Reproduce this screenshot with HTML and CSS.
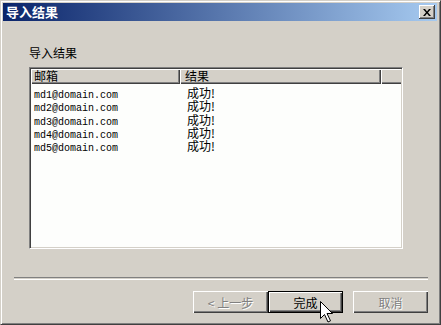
FILE: index.html
```html
<!DOCTYPE html>
<html lang="zh-CN">

<head>
    <meta charset="UTF-8">
    <meta name="viewport" content="width=device-width, initial-scale=1.0">
    <link rel="stylesheet" href="styles.css">
    <title>导入结果</title>
</head>

<body>
    <div class="window">
        <!-- Title bar -->
        <div class="titlebar">
            <span class="title">导入结果</span>
            <button class="close-btn" aria-label="关闭">
                <svg width="8" height="7" viewBox="0 0 8 7">
                    <path d="M0 0h2l2 2.5L6 0h2L5 3.5 8 7H6L4 4.5 2 7H0l3-3.5z" fill="#000"/>
                </svg>
            </button>
        </div>

        <div class="content">
            <div class="group-label">导入结果</div>

            <!-- Result list -->
            <div class="listview">
                <div class="lv-header">
                    <div class="lv-col col-mail">邮箱</div>
                    <div class="lv-col col-result">结果</div>
                    <div class="lv-col col-rest"></div>
                </div>
                <div class="lv-body">
                    <div class="lv-row"><span class="cell-mail">md1@domain.com</span><span class="cell-result">成功!</span></div>
                    <div class="lv-row"><span class="cell-mail">md2@domain.com</span><span class="cell-result">成功!</span></div>
                    <div class="lv-row"><span class="cell-mail">md3@domain.com</span><span class="cell-result">成功!</span></div>
                    <div class="lv-row"><span class="cell-mail">md4@domain.com</span><span class="cell-result">成功!</span></div>
                    <div class="lv-row"><span class="cell-mail">md5@domain.com</span><span class="cell-result">成功!</span></div>
                </div>
            </div>
        </div>

        <div class="separator"></div>

        <div class="buttons">
            <button class="btn disabled">&lt; 上一步</button>
            <button class="btn default">完成</button>
            <button class="btn disabled cancel">取消</button>
        </div>

        <!-- mouse pointer over the finish button -->
        <svg class="cursor" width="13" height="22" viewBox="0 0 13 22">
            <path d="M0.5 0.5v17l4-4 3.5 7.5 2.5-1.2-3.5-7.3h5.5z" fill="#fff" stroke="#000" stroke-width="1"/>
        </svg>
    </div>
</body>

</html>
```

FILE: styles.css
```css
body {
    margin: 0;
    padding: 0;
    background: #d4d0c8;
    font-family: 'Noto Sans CJK SC', 'DejaVu Sans', sans-serif;
    font-size: 12px;
    color: #000;
}

.window {
    position: relative;
    width: 441px;
    height: 325px;
    box-sizing: border-box;
    background: #d4d0c8;
    border-top: 1px solid #d4d0c8;
    border-left: 1px solid #d4d0c8;
    border-right: 1px solid #404040;
    border-bottom: 1px solid #404040;
    box-shadow: inset 1px 1px #fff, inset -1px -1px #808080;
    padding: 2px 3px 2px 2px;
    display: flex;
    flex-direction: column;
    overflow: hidden;
}

.titlebar {
    height: 18px;
    display: flex;
    align-items: center;
    justify-content: space-between;
    padding: 0 2px 0 3px;
    background: linear-gradient(to right, #0a246a, #a6caf0);
}

.title {
    color: #fff;
    font-weight: bold;
    font-size: 13px;
    line-height: 14px;
}

.close-btn {
    width: 16px;
    height: 14px;
    padding: 0;
    margin: 0;
    border: none;
    background: #d4d0c8;
    box-shadow: inset -1px -1px #404040, inset 1px 1px #fff, inset -2px -2px #808080;
    display: flex;
    align-items: center;
    justify-content: center;
}

.content {
    padding: 25px 0 0 26px;
}

.group-label {
    line-height: 14px;
    margin-bottom: 7px;
}

.listview {
    width: 374px;
    height: 182px;
    box-sizing: border-box;
    background: #fdfefc;
    border-top: 1px solid #808080;
    border-left: 1px solid #808080;
    border-right: 1px solid #fff;
    border-bottom: 1px solid #fff;
    box-shadow: inset 1px 1px #404040, inset -1px -1px #d4d0c8;
    padding: 1px;
}

.lv-header {
    display: flex;
    height: 15px;
}

.lv-col {
    box-sizing: border-box;
    height: 15px;
    line-height: 14px;
    background: #d4d0c8;
    box-shadow: inset 1px 1px #fff, inset -1px -1px #404040, inset -2px -2px #808080;
    padding-left: 3px;
}

.col-mail {
    width: 149px;
}

.col-result {
    width: 201px;
    padding-left: 5px;
}

.col-rest {
    flex: 1;
    box-shadow: inset 1px 1px #fff, inset 0 -1px #404040, inset 0 -2px #808080;
}

.lv-body {
    padding-top: 2px;
}

.lv-row {
    display: flex;
    align-items: baseline;
    height: 13.25px;
    line-height: 13px;
}

.cell-mail {
    width: 153px;
    padding-left: 3px;
    font-family: 'Liberation Mono', monospace;
    font-size: 10px;
}

.cell-result {
    font-size: 12px;
}

.separator {
    margin: 28px 9px 0 11px;
    height: 1px;
    border-top: 1px solid #808080;
    border-bottom: 1px solid #fff;
}

.buttons {
    display: flex;
    justify-content: flex-end;
    padding: 11px 9px 0 0;
}

.btn {
    width: 75px;
    height: 22px;
    box-sizing: border-box;
    margin: 0;
    padding: 0;
    border: none;
    background: #d4d0c8;
    font-family: 'Noto Sans CJK SC', sans-serif;
    font-size: 12px;
    color: #000;
    box-shadow: inset 1px 1px #fff, inset -1px -1px #404040, inset -2px -2px #808080;
}

.btn.default {
    border: 1px solid #000;
}

.btn.disabled {
    color: #808080;
    text-shadow: 1px 1px #fff;
}

.btn.cancel {
    margin-left: 10px;
}

.cursor {
    position: absolute;
    left: 319px;
    top: 300px;
}
```
